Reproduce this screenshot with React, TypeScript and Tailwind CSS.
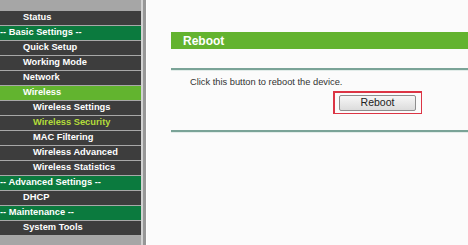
const menu: { label: string; kind: "item" | "sub" | "head" | "active" | "current" }[] = [
  { label: "Status", kind: "item" },
  { label: "-- Basic Settings --", kind: "head" },
  { label: "Quick Setup", kind: "item" },
  { label: "Working Mode", kind: "item" },
  { label: "Network", kind: "item" },
  { label: "Wireless", kind: "active" },
  { label: "Wireless Settings", kind: "sub" },
  { label: "Wireless Security", kind: "current" },
  { label: "MAC Filtering", kind: "sub" },
  { label: "Wireless Advanced", kind: "sub" },
  { label: "Wireless Statistics", kind: "sub" },
  { label: "-- Advanced Settings --", kind: "head" },
  { label: "DHCP", kind: "item" },
  { label: "-- Maintenance --", kind: "head" },
  { label: "System Tools", kind: "item" },
];

function MenuRow({ label, kind }: { label: string; kind: string }) {
  const bg =
    kind === "head" ? "bg-[#0b7a3e]" : kind === "active" ? "bg-[#62b42f]" : "bg-[#3d3d3d]";
  const pad = kind === "head" ? "pl-0" : kind === "sub" || kind === "current" ? "pl-[33px]" : "pl-[23px]";
  const color = kind === "current" ? "text-[#b4dc3a]" : "text-white";
  return (
    <div
      className={`flex h-[15px] items-center border-b border-[#a8a8a8] ${bg} ${pad} ${color} text-[9.3px] font-bold leading-none`}
    >
      {label}
    </div>
  );
}

export default function App() {
  return (
    <div
      className="flex h-[245px] w-[468px] overflow-hidden bg-[#fbfbfb]"
      style={{ fontFamily: '"Liberation Sans", Arial, sans-serif' }}
    >
      <aside className="flex w-[141px] shrink-0 flex-col bg-[#a6a6a6] pt-[11px]">
        {menu.map((m) => (
          <MenuRow key={m.label} label={m.label} kind={m.kind} />
        ))}
      </aside>
      <div className="w-[2px] shrink-0 bg-[#d2d2d2]" />
      <div className="w-[3px] shrink-0 bg-[#979797]" />
      <div className="w-[1px] shrink-0 bg-[#ffffff]" />

      <main className="flex flex-1 flex-col pl-[24px] pt-[32px]">
        <div className="flex h-[17px] items-center bg-[#63b32f] pl-[12px] text-[12px] font-bold text-white">
          Reboot
        </div>
        <div className="mt-[19px] h-[2px] bg-[#7aa397]" />
        <div className="h-[1px] bg-[#e2ece9]" />
        <p className="mt-[6px] pl-[19px] text-[9.3px] leading-[11px] text-[#333333]">
          Click this button to reboot the device.
        </p>
        <div className="mt-[3px] ml-[162px] w-[89px] bg-[#dc3545] p-[1.5px]">
          <div className="flex h-[20px] items-center justify-center bg-[#fbfbfb]">
            <button className="h-[16px] w-[77px] rounded-[2px] border border-[#8e8e8e] bg-gradient-to-b from-[#f7f7f7] to-[#dcdcdc] text-[10.5px] leading-none text-[#222222]">
              Reboot
            </button>
          </div>
        </div>
        <div className="mt-[16px] h-[2px] bg-[#7aa397]" />
        <div className="h-[1px] bg-[#e2ece9]" />
      </main>
    </div>
  );
}
